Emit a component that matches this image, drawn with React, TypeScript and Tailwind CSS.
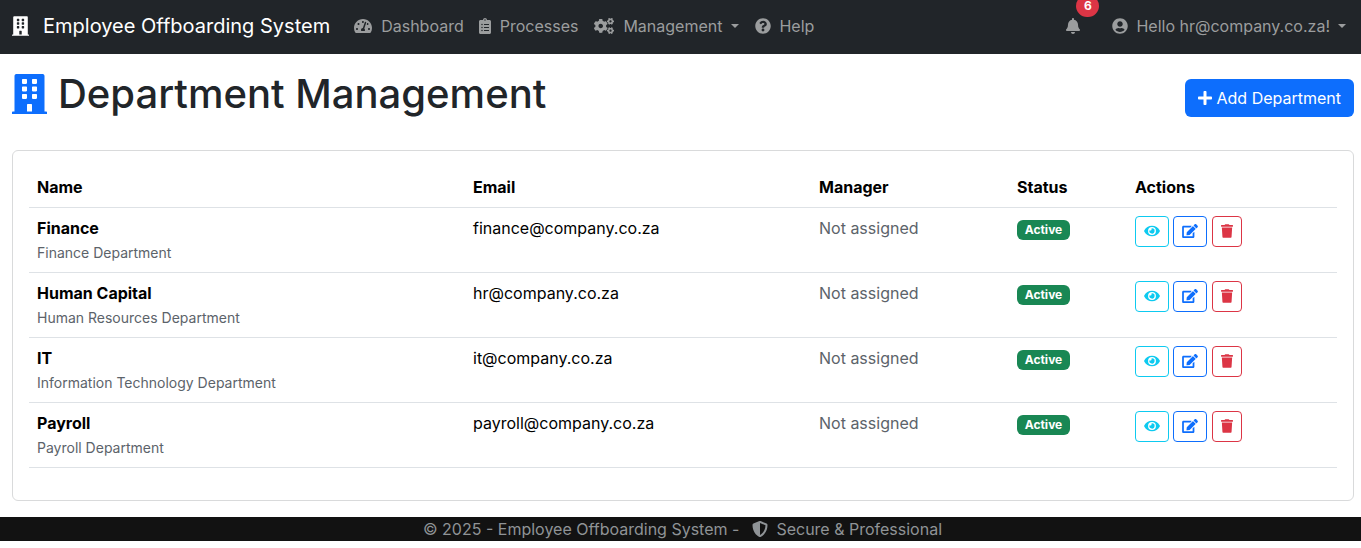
import { FaBell, FaBuilding, FaClipboardList, FaCogs, FaEdit, FaEye, FaPlus, FaQuestionCircle, FaShieldAlt, FaTachometerAlt, FaTrash, FaUserCircle } from "react-icons/fa";

const departments = [
  { name: "Finance", description: "Finance Department", email: "finance@company.co.za" },
  { name: "Human Capital", description: "Human Resources Department", email: "hr@company.co.za" },
  { name: "IT", description: "Information Technology Department", email: "it@company.co.za" },
  { name: "Payroll", description: "Payroll Department", email: "payroll@company.co.za" },
];

function NavItem({ icon, label, caretClass, className }: { icon: React.ReactNode; label: string; caretClass?: string; className?: string }) {
  return (
    <a className={`flex items-center text-[16px] text-[#9b9d9e] ${className ?? "gap-[9px]"}`}>
      {icon}
      <span>{label}</span>
      {caretClass && <span className={`inline-block border-x-[4.8px] border-t-[4.8px] border-x-transparent border-t-current ${caretClass}`} />}
    </a>
  );
}

export default function App() {
  return (
    <div className="min-h-[548px] bg-white font-['Inter',sans-serif] text-[16px] leading-6 text-[#212529]">
      <nav className="flex h-[54px] items-center bg-[#212529] pb-[2px] pl-3 pr-[15px]">
        <FaBuilding className="h-[20px] w-[17px] text-white" />
        <span className="ml-[14px] text-[20px] text-white">Employee Offboarding System</span>
        <div className="ml-6 flex items-center gap-[15px]">
          <NavItem icon={<FaTachometerAlt className="h-4 w-[18px]" />} label="Dashboard" />
          <NavItem icon={<FaClipboardList className="h-4 w-3" />} label="Processes" />
          <NavItem icon={<FaCogs className="h-4 w-5" />} label="Management" caretClass="ml-0" className="ml-px mr-px gap-[9px]" />
          <NavItem icon={<FaQuestionCircle className="h-4 w-4" />} label="Help" className="gap-2" />
        </div>
        <div className="relative ml-auto mr-[32px] text-[#9b9d9e]">
          <FaBell className="h-4 w-[14px]" />
          <span className="absolute left-[10px] top-[-23px] flex h-[22px] w-[23px] items-center justify-center rounded-[11px] bg-[#dc3545] text-[12px] font-bold text-white">6</span>
        </div>
        <NavItem icon={<FaUserCircle className="h-4 w-4" />} label="Hello hr@company.co.za!" caretClass="ml-0" className="gap-2" />
      </nav>

      <main className="pl-3 pr-[7px]">
        <div className="flex h-[96px] items-start justify-between">
          <h1 className="mt-4 flex items-center text-[40px] leading-[48px] font-medium">
            <FaBuilding className="mr-[11px] h-10 w-[35px] text-[#0d6efd]" />
            Department Management
          </h1>
          <button className="mt-[25px] flex h-[38px] items-center gap-[5px] rounded-md bg-[#0d6efd] px-[13px] text-white">
            <FaPlus className="h-4 w-[14px]" />
            Add Department
          </button>
        </div>

        <section className="rounded-md border border-[#d9dadb] p-4 pb-[32px]">
          <table className="w-[1308px] table-fixed border-collapse text-black">
            <colgroup>
              <col className="w-[436px]" />
              <col className="w-[346px]" />
              <col className="w-[198px]" />
              <col className="w-[118px]" />
              <col className="w-[210px]" />
            </colgroup>
            <thead>
              <tr className="h-[40px] border-b border-[#dee2e6] text-left font-bold">
                <th className="px-2">Name</th>
                <th className="px-2">Email</th>
                <th className="px-2">Manager</th>
                <th className="px-2">Status</th>
                <th className="px-2">Actions</th>
              </tr>
            </thead>
            <tbody>
              {departments.map((d) => (
                <tr key={d.name} className="h-[65px] border-b border-[#dee2e6] align-top">
                  <td className="px-2 pt-2">
                    <div className="font-bold">{d.name}</div>
                    <div className="mt-[2px] text-[14px] leading-[21px] text-[#5c636a]">{d.description}</div>
                  </td>
                  <td className="px-2 pt-2">{d.email}</td>
                  <td className="px-2 pt-2 text-[#5c636a]">Not assigned</td>
                  <td className="px-2 pt-2">
                    <span className="inline-flex h-5 w-[53px] items-center justify-center rounded-md bg-[#198754] text-[12px] font-bold text-white">Active</span>
                  </td>
                  <td className="px-2 pt-2">
                    <div className="flex gap-1">
                      <button className="flex h-[31px] w-[34px] items-center justify-center rounded-[4px] border border-[#0dcaf0] text-[#0dcaf0]"><FaEye className="h-[14px] w-4" /></button>
                      <button className="flex h-[31px] w-[34px] items-center justify-center rounded-[4px] border border-[#0d6efd] text-[#0d6efd]"><FaEdit className="h-[14px] w-4" /></button>
                      <button className="ml-px flex h-[31px] w-[30px] items-center justify-center rounded-[4px] border border-[#dc3545] text-[#dc3545]"><FaTrash className="h-[14px] w-3" /></button>
                    </div>
                  </td>
                </tr>
              ))}
            </tbody>
          </table>
        </section>
      </main>

      <footer className="mt-4 flex h-6 items-center justify-center bg-[#121212] pl-1 text-[#8f9396]">
        <span>© 2025 - Employee Offboarding System -</span>
        <FaShieldAlt className="ml-[13px] mr-2 h-4 w-4" />
        <span>Secure &amp; Professional</span>
      </footer>
    </div>
  );
}
